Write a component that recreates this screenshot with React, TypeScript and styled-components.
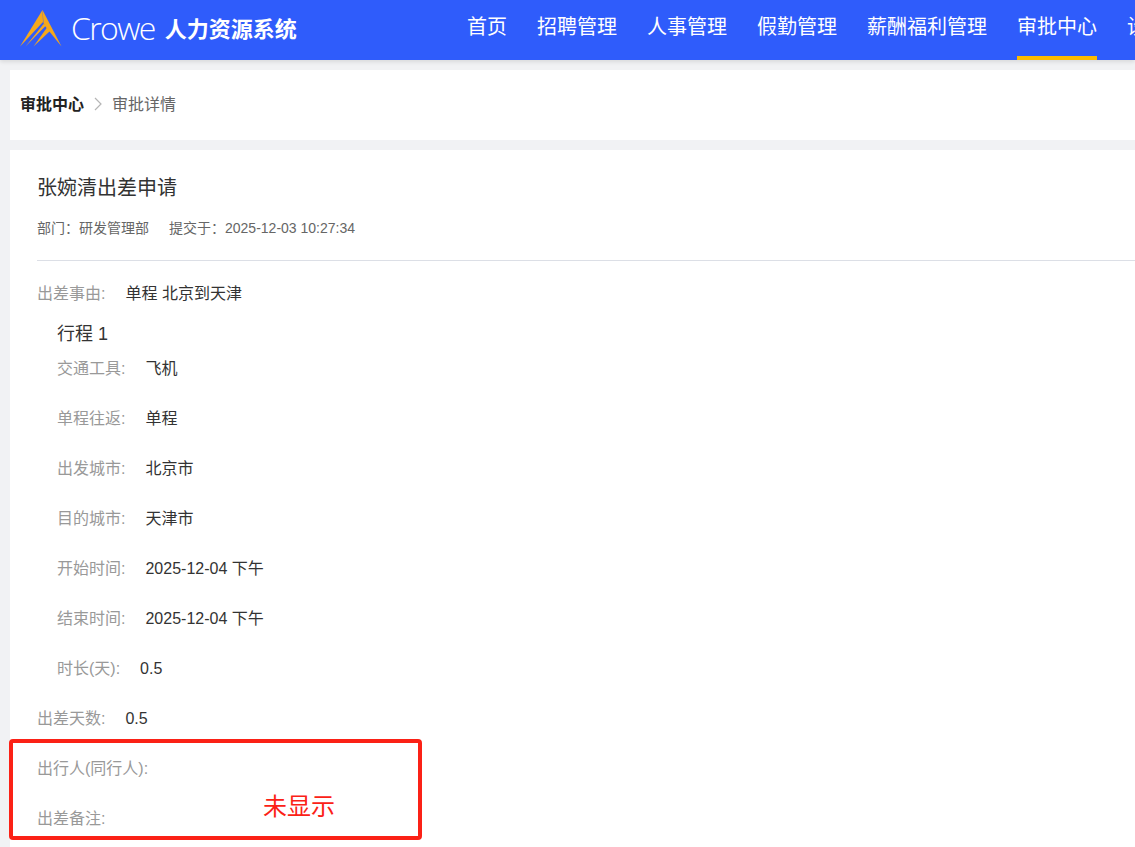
import React from "react";
import styled, { createGlobalStyle } from "styled-components";

const FONT = `"Liberation Sans", "Noto Sans CJK SC", sans-serif`;

const Global = createGlobalStyle`
  html, body { margin: 0; padding: 0; background: #f1f2f4; }
  body { font-family: ${FONT}; overflow: hidden; }
  * { box-sizing: border-box; }
`;

const Page = styled.div`
  position: relative;
  width: 1135px;
  height: 847px;
  overflow: hidden;
  background: #f1f2f4;
`;

const Header = styled.header`
  display: flex;
  align-items: center;
  height: 60px;
  background: #2f5cfb;
  box-shadow: 0 2px 4px rgba(0, 0, 0, 0.1);
  padding-left: 20px;
  white-space: nowrap;
`;

const LogoBlock = styled.div`
  display: flex;
  align-items: center;
  width: 447px;
  flex: none;
`;

const Brand = styled.span`
  font-family: "Open Sans", sans-serif;
  font-weight: 300;
  font-size: 32px;
  letter-spacing: -1.6px;
  color: #fff;
  margin: 0 0 6px 7px;
`;

const SystemName = styled.span`
  font-size: 22px;
  font-weight: 700;
  color: #fff;
  margin: 0 0 6px 10px;
`;

const Nav = styled.nav`
  display: flex;
  gap: 30px;
  height: 60px;
`;

const NavItem = styled.a<{ $active?: boolean }>`
  display: flex;
  align-items: center;
  height: 60px;
  font-size: 20px;
  color: #fff;
  padding-bottom: 5px;
  border-bottom: 4px solid ${(p) => (p.$active ? "#fdbb00" : "transparent")};
`;

const Main = styled.main`
  display: flex;
  flex-direction: column;
  gap: 10px;
  padding: 10px 0 0 10px;
  width: 1160px;
`;

const Crumbs = styled.div`
  display: flex;
  align-items: center;
  height: 70px;
  background: #fff;
  padding: 0 0 5px 10px;
  font-size: 16px;
`;

const CrumbRoot = styled.span`
  font-weight: 700;
  color: #222;
`;

const CrumbSep = styled.span`
  display: flex;
  margin: 2px 10px 0;
`;

const CrumbLeaf = styled.span`
  color: #666;
`;

const Card = styled.section`
  background: #fff;
  padding: 24px 0 0 27px;
  height: 720px;
`;

const Title = styled.h1`
  margin: 0;
  font-size: 20px;
  font-weight: 400;
  line-height: 28px;
  color: #333;
`;

const Meta = styled.div`
  display: flex;
  gap: 20px;
  margin-top: 16px;
  font-size: 14px;
  line-height: 20px;
  color: #666;
  padding-bottom: 22px;
  border-bottom: 1px solid #dcdfe6;
`;

const Fields = styled.div`
  padding-top: 8px;
`;

const Row = styled.div`
  display: flex;
  align-items: baseline;
  height: 50px;
  line-height: 50px;
  font-size: 16px;
`;

const Label = styled.span`
  color: #999;
`;

const Value = styled.span`
  color: #333;
  margin-left: 20px;
`;

const Trip = styled.div`
  padding-left: 20px;
  margin-top: 3px;
`;

const TripTitle = styled.div`
  font-size: 18px;
  line-height: 24px;
  color: #333;
  margin-bottom: -2px;
`;

const Callout = styled.div`
  position: absolute;
  left: 9px;
  top: 739px;
  width: 413px;
  height: 101px;
  border: 4px solid #fb2116;
  border-radius: 4px;
`;

const CalloutText = styled.span`
  position: absolute;
  left: 263px;
  top: 790px;
  font-size: 24px;
  line-height: 34px;
  color: #fb2116;
`;

const Logo = () => (
  <svg width="44" height="40" viewBox="0 0 44 40" style={{ flex: "none" }} fill="#f5a81c">
    <path d="M22.5 0 L41.5 36.5 L25 16 L23.5 13 Z" />
    <path d="M22.5 0 L23 12 L0 36.5 Z" />
    <path d="M23.5 14 L5.5 36.5 L26 15.5 Z" />
    <path d="M27 17.5 L13.5 36.5 L30 21 Z" />
  </svg>
);

const nav = ["首页", "招聘管理", "人事管理", "假勤管理", "薪酬福利管理", "审批中心", "设置"];
const trip: [string, string][] = [
  ["交通工具:", "飞机"],
  ["单程往返:", "单程"],
  ["出发城市:", "北京市"],
  ["目的城市:", "天津市"],
  ["开始时间:", "2025-12-04 下午"],
  ["结束时间:", "2025-12-04 下午"],
  ["时长(天):", "0.5"],
];

export default function App() {
  return (
    <Page>
      <Global />
      <Header>
        <LogoBlock>
          <Logo />
          <Brand>Crowe</Brand>
          <SystemName>人力资源系统</SystemName>
        </LogoBlock>
        <Nav>
          {nav.map((n) => (
            <NavItem key={n} $active={n === "审批中心"}>{n}</NavItem>
          ))}
        </Nav>
      </Header>
      <Main>
        <Crumbs>
          <CrumbRoot>审批中心</CrumbRoot>
          <CrumbSep>
            <svg width="8" height="14" viewBox="0 0 8 14" fill="none" stroke="#b5b5b5" strokeWidth="1.2">
              <path d="M1 1 L7 7 L1 13" />
            </svg>
          </CrumbSep>
          <CrumbLeaf>审批详情</CrumbLeaf>
        </Crumbs>
        <Card>
          <Title>张婉清出差申请</Title>
          <Meta>
            <span>{"部门\uFF1A研发管理部"}</span>
            <span>{"提交于\uFF1A2025-12-03 10:27:34"}</span>
          </Meta>
          <Fields>
            <Row><Label>出差事由:</Label><Value>单程 北京到天津</Value></Row>
            <Trip>
              <TripTitle>行程 1</TripTitle>
              {trip.map(([l, v]) => (
                <Row key={l}><Label>{l}</Label><Value>{v}</Value></Row>
              ))}
            </Trip>
            <Row><Label>出差天数:</Label><Value>0.5</Value></Row>
            <Row><Label>出行人(同行人):</Label></Row>
            <Row><Label>出差备注:</Label></Row>
          </Fields>
        </Card>
      </Main>
      <Callout />
      <CalloutText>未显示</CalloutText>
    </Page>
  );
}
